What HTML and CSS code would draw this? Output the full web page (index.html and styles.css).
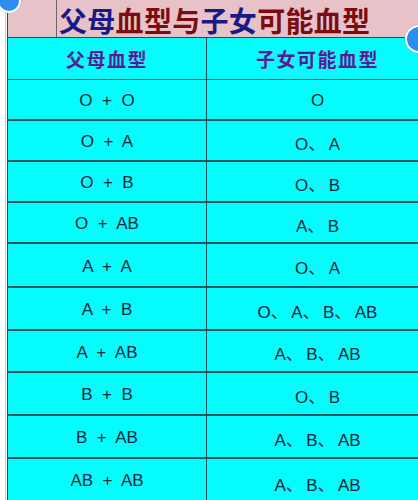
FILE: index.html
```html
<!DOCTYPE html>
<html>
<head>
<meta charset="utf-8">
<link rel="stylesheet" href="styles.css">
</head>
<body>
<div class="page">
  <div class="gutter"></div>
  <div class="sheet">
    <div class="title-row">
      <div class="title"><span class="navy">父母</span><span class="red">血型与</span><span class="navy">子女</span><span class="red">可能血型</span></div>
    </div>
    <div class="grid">
      <div class="cell head">父母血型</div><div class="cell head">子女可能血型</div>
      <div class="cell r1">O  +  O</div><div class="cell r1">O</div>
      <div class="cell r2">O  +  A</div><div class="cell r2">O、&#8201;A</div>
      <div class="cell r3">O  +  B</div><div class="cell r3">O、&#8201;B</div>
      <div class="cell r4">O  +  AB</div><div class="cell r4">A、&#8201;B</div>
      <div class="cell r5">A  +  A</div><div class="cell r5">O、&#8201;A</div>
      <div class="cell r6">A  +  B</div><div class="cell r6">O、&#8201;A、&#8201;B、&#8201;AB</div>
      <div class="cell r7">A  +  AB</div><div class="cell r7">A、&#8201;B、&#8201;AB</div>
      <div class="cell r8">B  +  B</div><div class="cell r8">O、&#8201;B</div>
      <div class="cell r9">B  +  AB</div><div class="cell r9">A、&#8201;B、&#8201;AB</div>
      <div class="cell r10">AB  +  AB</div><div class="cell r10">A、&#8201;B、&#8201;AB</div>
    </div>
  </div>
  <div class="dot dot-left"></div>
  <div class="dot dot-right"></div>
</div>
</body>
</html>
```

FILE: styles.css
```css
html, body {
  margin: 0;
  padding: 0;
  background: #ffffff;
  overflow: hidden;
}
.page {
  position: relative;
  width: 418px;
  height: 500px;
  display: flex;
  overflow: hidden;
  font-family: "Liberation Sans", "Noto Sans CJK SC", sans-serif;
}
.gutter {
  width: 5px;
  flex: none;
  border-right: 1px solid #c8ccd0;
  margin-right: 1px;
}
.sheet {
  flex: none;
  width: 420px;
  border-left: 1px solid #1d4f5c;
  display: flex;
  flex-direction: column;
}
.title-row {
  flex: none;
  height: 37px;
  background: #e7c2c9;
  border-bottom: 1px solid #1d4f5c;
  padding-left: 48px;
  display: flex;
}
.title {
  border-left: 1px solid #6a6a6a;
  padding-left: 2px;
  padding-top: 4px;
  font-family: "Noto Sans CJK SC", sans-serif;
  font-weight: 700;
  font-size: 28px;
  line-height: 33px;
  letter-spacing: 0.3px;
  white-space: nowrap;
}
.navy { color: #1a1a86; }
.red { color: #7c0c12; }
.grid {
  flex: none;
  display: grid;
  grid-template-columns: 199px 1fr;
  grid-template-rows: 42px 41px 41px 41px 41px 44px 43px 42px 43px 43px 60px;
  background: #06fbfd;
}
.cell {
  border-bottom: 2px solid #1d5663;
  display: flex;
  align-items: center;
  justify-content: center;
  font-size: 17px;
  color: #13283a;
  white-space: pre;
  padding-top: 3px;
}
.cell:nth-child(odd) {
  border-right: 1px solid #1d4f5c;
}
.cell.head {
  font-family: "Noto Sans CJK SC", sans-serif;
  font-weight: 700;
  font-size: 19px;
  color: #5a1a96;
  border-bottom-width: 1px;
  letter-spacing: 1.5px;
  padding-top: 0;
}
.cell.r10 {
  align-items: flex-start;
  padding-top: 12px;
}
.dot {
  position: absolute;
  border-radius: 50%;
  background: #2b8ef0;
  border: 2px solid #ffffff;
  box-shadow: 0 0 1px rgba(0,0,0,0.3);
}
.dot-left {
  width: 20px;
  height: 20px;
  left: -3px;
  top: -11px;
}
.dot-right {
  width: 24px;
  height: 24px;
  left: 405px;
  top: 25px;
}
```
